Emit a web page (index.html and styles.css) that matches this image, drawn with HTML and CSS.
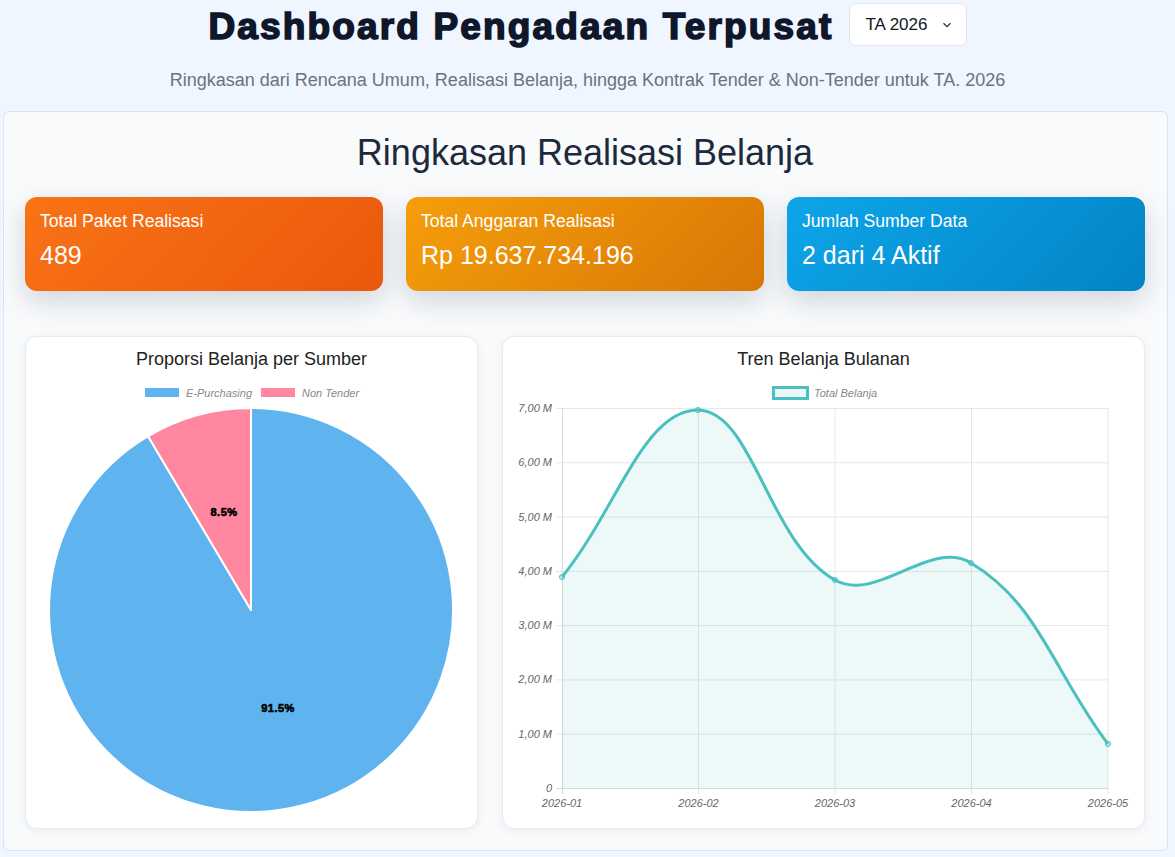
FILE: index.html
```html
<!DOCTYPE html>
<html lang="id">
<head>
<meta charset="utf-8">
<title>Dashboard Pengadaan Terpusat</title>
<link rel="stylesheet" href="styles.css">
</head>
<body>
<header class="top">
  <div class="top-row">
    <h1 class="title">Dashboard Pengadaan Terpusat</h1>
    <div class="year-select">
      <span>TA 2026</span>
      <svg class="chev" width="10" height="6" viewBox="0 0 10 6"><path d="M1.5 1.2 L5 4.6 L8.5 1.2" fill="none" stroke="#333" stroke-width="1.3"/></svg>
    </div>
  </div>
  <p class="subtitle">Ringkasan dari Rencana Umum, Realisasi Belanja, hingga Kontrak Tender &amp; Non-Tender untuk TA. 2026</p>
</header>

<main class="panel">
  <h2 class="panel-title">Ringkasan Realisasi Belanja</h2>

  <section class="stats">
    <div class="stat stat-orange">
      <div class="stat-label">Total Paket Realisasi</div>
      <div class="stat-value">489</div>
    </div>
    <div class="stat stat-amber">
      <div class="stat-label">Total Anggaran Realisasi</div>
      <div class="stat-value">Rp 19.637.734.196</div>
    </div>
    <div class="stat stat-blue">
      <div class="stat-label">Jumlah Sumber Data</div>
      <div class="stat-value">2 dari 4 Aktif</div>
    </div>
  </section>

  <section class="charts">
    <div class="chart-card">
      <h3 class="chart-title">Proporsi Belanja per Sumber</h3>
      <svg class="chart-svg" width="451" height="446" viewBox="1 46 451 446">
        <rect x="120" y="52" width="34" height="9" fill="#5fb4ef"/>
        <text class="legend" x="161" y="60.5">E-Purchasing</text>
        <rect x="236" y="52" width="34" height="9" fill="#ff879f"/>
        <text class="legend" x="277" y="60.5">Non Tender</text>
        <path d="M226 274 L226 72 A202 202 0 1 1 123.1 100.2 Z" fill="#5fb4ef" stroke="#fff" stroke-width="2" stroke-linejoin="round"/>
        <path d="M226 274 L123.1 100.2 A202 202 0 0 1 226 72 Z" fill="#ff879f" stroke="#fff" stroke-width="2" stroke-linejoin="round"/>
        <text class="pie-label" x="199" y="180" text-anchor="middle">8.5%</text>
        <text class="pie-label" x="253" y="376" text-anchor="middle">91.5%</text>
      </svg>
    </div>

    <div class="chart-card">
      <h3 class="chart-title">Tren Belanja Bulanan</h3>
      <svg class="chart-svg" width="641" height="446" viewBox="1 46 641 446">
        <rect x="271.5" y="51.5" width="34" height="11" fill="rgba(75,192,192,0.12)" stroke="#4bc0c0" stroke-width="3"/>
        <text class="legend" x="312" y="60.5">Total Belanja</text>

        <g class="grid">
          <line x1="54" y1="72.5" x2="606" y2="72.5"/>
          <line x1="54" y1="126.8" x2="606" y2="126.8"/>
          <line x1="54" y1="181.1" x2="606" y2="181.1"/>
          <line x1="54" y1="235.4" x2="606" y2="235.4"/>
          <line x1="54" y1="289.6" x2="606" y2="289.6"/>
          <line x1="54" y1="343.9" x2="606" y2="343.9"/>
          <line x1="54" y1="398.2" x2="606" y2="398.2"/>
          <line x1="196.5" y1="72" x2="196.5" y2="458"/>
          <line x1="333" y1="72" x2="333" y2="458"/>
          <line x1="469.5" y1="72" x2="469.5" y2="458"/>
          <line x1="606" y1="72" x2="606" y2="458"/>
        </g>
        <g class="axis">
          <line x1="60.5" y1="72" x2="60.5" y2="458"/>
          <line x1="54" y1="452.5" x2="606" y2="452.5"/>
        </g>

        <path d="M60 241 C114.4 174.2 141.8 73.4 196 74 C251 74.6 265.9 206.4 333 244 C375.1 267.6 427.9 202.3 469 227 C537.1 267.9 551.2 335.6 606 408 L606 452 L60 452 Z" fill="rgba(75,192,192,0.1)"/>
        <path d="M60 241 C114.4 174.2 141.8 73.4 196 74 C251 74.6 265.9 206.4 333 244 C375.1 267.6 427.9 202.3 469 227 C537.1 267.9 551.2 335.6 606 408" fill="none" stroke="#4bc0c0" stroke-width="3"/>
        <g class="pts">
          <circle cx="60" cy="241" r="2.5"/>
          <circle cx="196" cy="74" r="2.5"/>
          <circle cx="333" cy="244" r="2.5"/>
          <circle cx="469" cy="227" r="2.5"/>
          <circle cx="606" cy="408" r="2.5"/>
        </g>

        <g class="tick-y">
          <text x="50" y="76">7,00 M</text>
          <text x="50" y="130.3">6,00 M</text>
          <text x="50" y="184.6">5,00 M</text>
          <text x="50" y="238.9">4,00 M</text>
          <text x="50" y="293.1">3,00 M</text>
          <text x="50" y="347.4">2,00 M</text>
          <text x="50" y="401.7">1,00 M</text>
          <text x="50" y="456">0</text>
        </g>
        <g class="tick-x">
          <text x="60" y="471">2026-01</text>
          <text x="196.5" y="471">2026-02</text>
          <text x="333" y="471">2026-03</text>
          <text x="469.5" y="471">2026-04</text>
          <text x="606" y="471">2026-05</text>
        </g>
      </svg>
    </div>
  </section>
</main>
</body>
</html>
```

FILE: styles.css
```css
* { box-sizing: border-box; }

body {
  margin: 0;
  background: #eff6ff;
  font-family: "Liberation Sans", Arial, sans-serif;
  color: #1f2937;
}

.top {
  text-align: center;
  padding-top: 3px;
}

.top-row {
  display: flex;
  justify-content: center;
  align-items: flex-start;
  gap: 16px;
}

.title {
  margin: 0;
  padding-top: 4px;
  font-size: 37px;
  font-weight: 700;
  letter-spacing: 2.15px;
  color: #0f172a;
  -webkit-text-stroke: 1.6px #0f172a;
  line-height: 39px;
  white-space: nowrap;
}

.year-select {
  display: flex;
  align-items: center;
  flex-shrink: 0;
  gap: 14px;
  height: 43px;
  padding: 0 14px 0 15px;
  background: #fff;
  border: 1px solid #e2e8f0;
  border-radius: 7px;
  font-size: 17px;
  color: #111827;
  white-space: nowrap;
}

.chev { margin-top: 1px; }

.subtitle {
  margin: 24px 0 0;
  font-size: 18px;
  line-height: 20px;
  color: #6b7280;
}

.panel {
  margin: 21px 7px 0 3px;
  background: #f8fafc;
  border: 1px solid #dbe3ec;
  border-radius: 6px;
  padding: 20px 22px 21px 21px;
}

.panel-title {
  margin: 0;
  text-align: center;
  font-size: 36px;
  font-weight: 400;
  line-height: 42px;
  color: #1e293b;
}

.stats {
  display: grid;
  grid-template-columns: repeat(3, 1fr);
  gap: 23px;
  margin-top: 23px;
}

.stat {
  height: 94px;
  border-radius: 12px;
  padding: 14px 15px;
  color: #fff;
  box-shadow: 0 10px 28px rgba(15, 23, 42, 0.16);
}

.stat-orange { background: linear-gradient(135deg, #f97316, #ea580c); }
.stat-amber { background: linear-gradient(135deg, #f59e0b, #d97706); }
.stat-blue { background: linear-gradient(135deg, #0ea5e9, #0284c7); }

.stat-label {
  font-size: 17.6px;
  line-height: 20px;
}

.stat-value {
  margin-top: 10px;
  font-size: 25px;
  line-height: 28px;
}

.charts {
  display: grid;
  grid-template-columns: 453px 643px;
  gap: 24px;
  margin-top: 45px;
}

.chart-card {
  height: 493px;
  background: #fff;
  border: 1px solid #e1ecf7;
  border-radius: 12px;
  box-shadow: 0 2px 8px rgba(15, 23, 42, 0.06);
  overflow: hidden;
}

.chart-title {
  margin: 0;
  height: 45px;
  line-height: 45px;
  text-align: center;
  font-size: 18px;
  font-weight: 400;
  color: #222;
}

.chart-svg { display: block; }

.legend {
  font-family: "Liberation Sans", Arial, sans-serif;
  font-size: 11px;
  font-style: italic;
  fill: #888;
}

.pie-label {
  font-family: "Liberation Sans", Arial, sans-serif;
  font-size: 11px;
  font-weight: 700;
  fill: #000;
  stroke: #000;
  stroke-width: 0.6px;
  letter-spacing: 0.5px;
}

.grid line { stroke: #e6e6e6; stroke-width: 1; }
.axis line { stroke: #d9d9d9; stroke-width: 1; }

.pts circle {
  fill: rgba(75, 192, 192, 0.25);
  stroke: #4bc0c0;
  stroke-width: 1;
}

.tick-y text, .tick-x text {
  font-family: "Liberation Sans", Arial, sans-serif;
  font-size: 11px;
  font-style: italic;
  fill: #666;
}

.tick-y text { text-anchor: end; }
.tick-x text { text-anchor: middle; }
```
